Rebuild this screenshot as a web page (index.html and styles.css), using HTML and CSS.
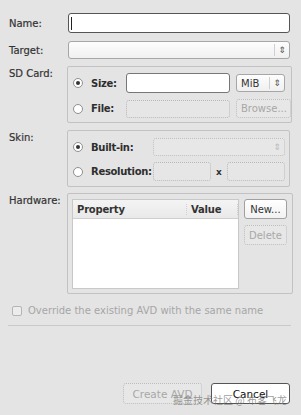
FILE: index.html
```html
<!DOCTYPE html>
<html lang="en">
<head>
    <meta charset="UTF-8">
    <title>Create new Android Virtual Device (AVD)</title>
    <link rel="stylesheet" href="styles.css">
</head>
<body>
    <div class="dialog">
        <div class="form">
            <div class="row">
                <label class="field-label">Name:</label>
                <div class="text-input focused"><span class="caret"></span></div>
            </div>
            <div class="row target-row">
                <label class="field-label">Target:</label>
                <div class="combo wide"><span class="combo-value"></span><span class="combo-arrow">&#8661;</span></div>
            </div>

            <div class="row group-row">
                <label class="field-label">SD Card:</label>
                <div class="group sd-group">
                    <div class="radio-opt"><span class="radio checked"></span>Size:</div>
                    <div class="text-input size-input"></div>
                    <div class="combo unit"><span class="combo-value">MiB</span><span class="combo-arrow">&#8661;</span></div>

                    <div class="radio-opt"><span class="radio"></span>File:</div>
                    <div class="text-input disabled"></div>
                    <button class="btn disabled browse">Browse...</button>
                </div>
            </div>

            <div class="row group-row">
                <label class="field-label">Skin:</label>
                <div class="group skin-group">
                    <div class="radio-opt"><span class="radio checked"></span>Built-in:</div>
                    <div class="combo disabled builtin"><span class="combo-value"></span><span class="combo-arrow">&#8661;</span></div>

                    <div class="radio-opt"><span class="radio"></span>Resolution:</div>
                    <div class="res-fields">
                        <div class="text-input disabled"></div>
                        <span class="times">x</span>
                        <div class="text-input disabled"></div>
                    </div>
                </div>
            </div>

            <div class="row group-row hw-row">
                <label class="field-label">Hardware:</label>
                <div class="group hw-group">
                    <div class="table">
                        <div class="table-head">
                            <span class="col-prop">Property</span>
                            <span class="col-value">Value</span>
                        </div>
                        <div class="table-body"></div>
                    </div>
                    <div class="side-buttons">
                        <button class="btn">New...</button>
                        <button class="btn disabled">Delete</button>
                    </div>
                </div>
            </div>
        </div>

        <div class="override">
            <span class="checkbox"></span>
            <span>Override the existing AVD with the same name</span>
        </div>
        <div class="separator"></div>

        <div class="actions">
            <button class="btn action disabled">Create AVD</button>
            <button class="btn action default">Cancel</button>
        </div>
        <div class="watermark">掘金技术社区 @ 布客飞龙</div>
    </div>
</body>
</html>
```

FILE: styles.css
```css
body, html {
    margin: 0;
    padding: 0;
    background-color: #e4e4e4;
    font-family: "DejaVu Sans", sans-serif;
    font-size: 10px;
    color: #333;
}
.dialog {
    position: relative;
    width: 301px;
    height: 415px;
    padding: 13px 11px 0 9px;
    box-sizing: border-box;
}
.form {
    display: flex;
    flex-direction: column;
    gap: 7px;
}
.row {
    display: flex;
    align-items: center;
}
.target-row { margin-top: 1px; }
.hw-row { margin-top: -1px; }
.group-row { align-items: flex-start; }
.field-label {
    width: 58px;
    flex: none;
    -webkit-text-stroke: 0.2px #333;
}
.group-row .field-label { padding-top: 2px; }

/* inputs */
.text-input {
    height: 18px;
    box-sizing: border-box;
    background: #fff;
    border: 1px solid #9a9a9a;
    border-radius: 3px;
    display: flex;
    align-items: center;
    flex: 1;
}
.text-input.focused {
    height: 20px;
    border-color: #555;
    margin-left: 1px;
}
.caret {
    width: 1px;
    height: 13px;
    background: #222;
    margin-left: 2px;
}
.text-input.disabled {
    background: #e6e6e6;
    border: 1px dotted #b8b8b8;
}
.combo {
    height: 18px;
    box-sizing: border-box;
    display: flex;
    align-items: center;
    background: linear-gradient(#fdfdfd, #f0f0f0);
    border: 1px solid #a6a6a6;
    border-radius: 3px;
    flex: 1;
}
.combo.wide { margin-left: 1px; }
.combo-value { flex: 1; padding-left: 4px; }
.combo-arrow {
    width: 14px;
    border-left: 1px solid #cfcfcf;
    text-align: center;
    font-size: 9px;
    color: #555;
    line-height: 12px;
}
.combo.disabled {
    background: #e7e7e7;
    border: 1px dotted #c0c0c0;
}
.combo.disabled .combo-arrow { color: #bbb; border-left: none; }

/* group boxes */
.group {
    flex: 1;
    border: 1px solid #c2c2c2;
    border-radius: 2px;
    box-sizing: border-box;
    display: grid;
    align-items: center;
}
.sd-group {
    height: 57px;
    grid-template-columns: 47px 104px 55px;
    column-gap: 6px;
    row-gap: 6px;
    padding: 6px 0 0 5px;
    align-content: start;
}
.sd-group .unit { margin-right: 6px; }
.sd-group .size-input { height: 20px; border-color: #777; }
.skin-group {
    height: 57px;
    grid-template-columns: 80px 132px;
    row-gap: 6px;
    padding: 7px 0 0 5px;
    align-content: start;
}
.skin-group .res-fields .text-input { height: 19px; }
.res-fields {
    display: flex;
    align-items: center;
}
.times { width: 16px; text-align: center; font-weight: bold; font-size: 9px; }
.radio-opt {
    display: flex;
    align-items: center;
    gap: 8px;
    font-weight: bold;
    letter-spacing: -0.3px;
    color: #2e2e2e;
}
.radio {
    width: 8px;
    height: 8px;
    border: 1px solid #8f8f8f;
    border-radius: 50%;
    background: #fff;
    position: relative;
}
.radio.checked::after {
    content: "";
    position: absolute;
    left: 2px;
    top: 2px;
    width: 4px;
    height: 4px;
    border-radius: 50%;
    background: #333;
}

/* hardware */
.hw-group {
    height: 101px;
    display: flex;
    align-items: flex-start;
    padding: 5px 5px 4px 4px;
    gap: 5px;
}
.table {
    width: 167px;
    height: 100%;
    display: flex;
    flex-direction: column;
    background: #fff;
    border: 1px solid #c8c8c8;
    box-sizing: border-box;
}
.table-head {
    height: 18px;
    display: flex;
    align-items: center;
    background: linear-gradient(#f4f4f4, #e9e9e9);
    border-bottom: 1px solid #cfcfcf;
    font-weight: bold;
    letter-spacing: -0.2px;
    color: #333;
}
.col-prop { width: 109px; padding-left: 4px; }
.col-value {
    flex: 1;
    padding-left: 4px;
    border-left: 1px dotted #cfcfcf;
    border-right: 1px dotted #cfcfcf;
}
.table-body { flex: 1; }
.side-buttons {
    display: flex;
    flex-direction: column;
    gap: 6px;
}

/* buttons */
.btn {
    font-family: inherit;
    font-size: 10px;
    color: #333;
    height: 20px;
    padding: 0 4px;
    background: linear-gradient(#ffffff, #f2f2f2);
    border: 1px solid #a0a0a0;
    border-radius: 3px;
}
.btn.disabled {
    color: #a8a8a8;
    background: #e7e7e7;
    border: 1px dotted #bdbdbd;
}
.browse { height: 19px; }

.override {
    display: flex;
    align-items: center;
    gap: 6px;
    margin: 11px 0 0 3px;
    color: #a6a6a6;
}
.checkbox {
    width: 8px;
    height: 8px;
    border: 1px solid #b5b5b5;
    border-radius: 2px;
    background: #ececec;
}
.separator {
    height: 1px;
    background: #c9c9c9;
    margin: 9px 0 0 -1px;
    width: 283px;
}
.actions {
    display: flex;
    justify-content: flex-end;
    gap: 9px;
    margin-top: 57px;
}
.action { width: 79px; height: 21px; font-size: 10.5px; }
.action.default { border: 1px solid #555; background: #fff; color: #111; }
.watermark {
    position: absolute;
    left: 173px;
    top: 392px;
    font-family: "Noto Sans CJK SC", sans-serif;
    font-size: 10px;
    color: rgba(120, 120, 120, 0.75);
    white-space: nowrap;
}
```
